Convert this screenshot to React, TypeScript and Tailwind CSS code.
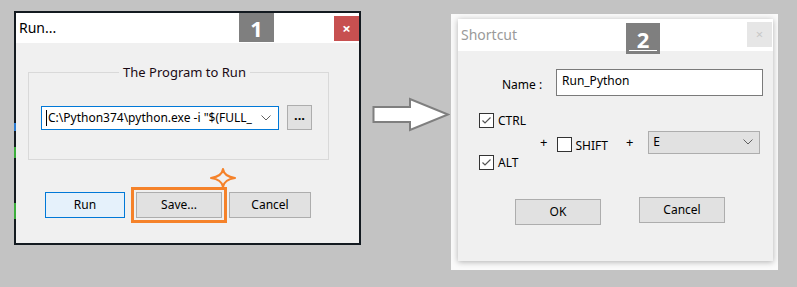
import React from "react";

function Chevron() {
  return (
    <svg width="10" height="6" viewBox="0 0 10 6" className="shrink-0">
      <path d="M0.5 0.5 L5 5 L9.5 0.5" fill="none" stroke="#606060" strokeWidth="1" />
    </svg>
  );
}

function CheckBox({ checked }: { checked: boolean }) {
  return (
    <div className="w-[15px] h-[15px] border border-[#333333] bg-white flex items-center justify-center shrink-0">
      {checked && (
        <svg width="13" height="13" viewBox="0 0 13 13">
          <path d="M2.5 6.5 L5 9 L10.5 3.5" fill="none" stroke="#555555" strokeWidth="1.2" />
        </svg>
      )}
    </div>
  );
}

export default function App() {
  return (
    <div className="w-[797px] h-[287px] bg-[#c3c3c3] flex items-start overflow-hidden font-['Noto_Sans','Open_Sans',sans-serif] text-[12px] text-black leading-none">
      {/* Left dialog: Run... */}
      <div className="mt-[11px] ml-[14px] w-[347px] h-[234px] border-2 border-[#131a20] bg-[#f0f0f0] flex flex-col relative shrink-0">
        <div className="absolute left-[-2px] top-[110px] w-[2px] h-[8px] bg-[#2b7bd0]" />
        <div className="absolute left-[-2px] top-[134px] w-[2px] h-[11px] bg-[#3cae3c]" />
        <div className="absolute left-[-2px] top-[190px] w-[2px] h-[16px] bg-[#3cae3c]" />
        <div className="h-[30px] bg-white flex items-center pl-[3px] pr-0 relative">
          <span className="text-[14px] text-black">Run...</span>
          <div className="ml-auto w-[25px] h-[25px] bg-[#c75050] flex items-center justify-center text-white text-[15px] font-bold">
            ×
          </div>
          <div className="absolute left-[223px] top-0 w-[35px] h-[29px] bg-[#7f7f7f] flex items-center justify-center text-white text-[22px] font-bold">
            1
          </div>
        </div>
        <div className="flex flex-col pl-[12px]">
          <fieldset className="mt-[21px] w-[301px] h-[96px] border border-[#d9d9d9] pl-[12px] pt-[24px]">
            <legend className="mx-auto px-[4px] text-[13px] text-[#1a0a14] leading-[17px]">The Program to Run</legend>
            <div className="flex items-center">
              <div className="w-[238px] h-[24px] border border-[#0078d7] bg-white flex items-center pl-[4px] pr-[7px]">
                <div className="w-px h-[16px] bg-black mr-px" />
                <span className="text-[12px] whitespace-nowrap mr-auto">C:\Python374\python.exe -i "$(FULL_</span>
                <Chevron />
              </div>
              <div className="ml-[8px] w-[25px] h-[25px] border border-[#adadad] bg-[#e1e1e1] flex items-center justify-center text-[13px] font-bold pb-[4px]">
                ...
              </div>
            </div>
          </fieldset>
          <div className="flex items-center mt-[27px] pl-[17px]">
            <div className="w-[80px] h-[26px] border border-[#0078d7] bg-[#e5f1fb] flex items-center justify-center">Run</div>
            <div className="ml-[6px] border-[3px] border-[#f5822a] p-[2px] relative">
              <div className="w-[86px] h-[26px] border border-[#adadad] bg-[#e1e1e1] flex items-center justify-center">Save...</div>
              <svg width="26" height="20" viewBox="0 0 26 20" className="absolute left-[76px] top-[-22px]">
                <path d="M13 1 Q14 8.5 25 10 Q14 11.5 13 19 Q12 11.5 1 10 Q12 8.5 13 1 Z" fill="#f0f0f0" stroke="#f5822a" strokeWidth="2" strokeLinejoin="round" />
              </svg>
            </div>
            <div className="ml-[2px] w-[82px] h-[26px] border border-[#adadad] bg-[#e1e1e1] flex items-center justify-center">Cancel</div>
          </div>
        </div>
      </div>

      {/* Arrow */}
      <svg width="78" height="38" viewBox="0 0 78 38" className="mt-[97px] ml-[11px] shrink-0">
        <path d="M1.5 10 H38 V2 L76 17.5 L38 33 V25 H1.5 Z" fill="#ffffff" stroke="#7f7f7f" strokeWidth="2" strokeLinejoin="miter" />
      </svg>

      {/* Right dialog: Shortcut */}
      <div className="mt-[14px] ml-[1px] w-[327px] h-[256px] bg-[#fafafa] pl-[7px] pt-[5px] shrink-0">
        <div className="w-[315px] h-[242px] bg-[#f0f0f0] flex flex-col shadow-[0_1px_6px_rgba(0,0,0,0.3)] relative">
          <div className="h-[32px] bg-white flex items-start pl-[3px] relative">
            <span className="text-[14px] text-[#9a9a9a] mt-[9px]">Shortcut</span>
            <div className="ml-auto mr-px mt-[3px] w-[25px] h-[25px] bg-[#e6e6e6] flex items-center justify-center text-[#c8c8c8] text-[13px]">
              ×
            </div>
          </div>
          <div className="absolute left-[168px] top-[4px] w-[34px] h-[31px] bg-[#7f7f7f] flex flex-col items-center justify-center text-white text-[22px] font-bold">
            <span className="mt-[1px]">2</span>
            <div className="absolute bottom-[3px] left-[3px] right-[3px] h-px bg-white" />
          </div>

          <div className="flex items-center mt-[18px] pl-[44px]">
            <span className="w-[54px] text-[12px] mt-[4px]">Name :</span>
            <div className="w-[207px] h-[27px] border border-[#7a7a7a] bg-white flex items-center pl-[5px] pb-[3px]">
              Run_Python
            </div>
          </div>

          <div className="flex items-center mt-[17px] pl-[21px]">
            <div className="w-[61px] flex flex-col gap-[27px]">
              <div className="flex items-center gap-[4px]">
                <CheckBox checked />
                <span>CTRL</span>
              </div>
              <div className="flex items-center gap-[4px]">
                <CheckBox checked />
                <span>ALT</span>
              </div>
            </div>
            <span className="text-[13px] mt-[1px]">+</span>
            <div className="ml-[10px] flex items-center gap-[3px] mt-[5px]">
              <CheckBox checked={false} />
              <span className="mt-[3px]">SHIFT</span>
            </div>
            <span className="ml-[18px] text-[13px] mt-[1px]">+</span>
            <div className="ml-[15px] w-[112px] h-[23px] border border-[#adadad] bg-[#e1e1e1] flex items-center pl-[4px] pr-[6px] mt-[1px]">
              <span className="flex-1">E</span>
              <Chevron />
            </div>
          </div>

          <div className="flex items-start mt-[27px] pl-[57px]">
            <div className="mt-[2px] w-[86px] h-[26px] border border-[#adadad] bg-[#e1e1e1] flex items-center justify-center">OK</div>
            <div className="ml-[38px] w-[86px] h-[26px] border border-[#adadad] bg-[#e1e1e1] flex items-center justify-center">Cancel</div>
          </div>
        </div>
      </div>
    </div>
  );
}
